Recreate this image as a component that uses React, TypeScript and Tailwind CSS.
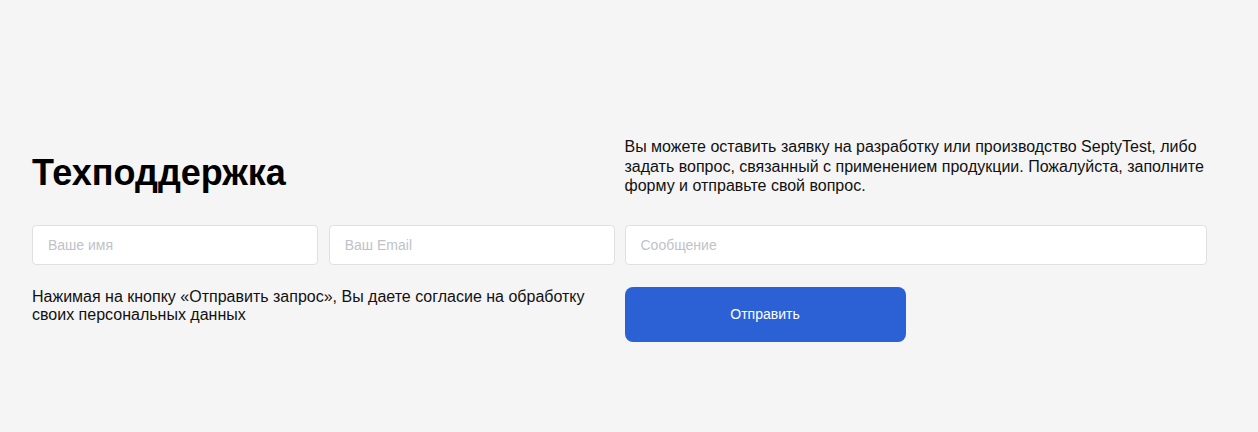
import React from 'react';

export default function App() {
  return (
    <div className="min-h-[432px] bg-[#f5f5f5] font-['Liberation_Sans',Arial,sans-serif] text-black">
      <section className="pl-[32px] pr-[51px] pt-[137px]">
        <div className="grid grid-cols-2 gap-x-[10px]">
          <div className="flex items-center pt-[14px]">
            <h2 className="text-[36px] font-bold leading-none">Техподдержка</h2>
          </div>
          <p className="text-[16px] leading-[19.5px] text-[#111]">
            Вы можете оставить заявку на разработку или производство SeptyTest, либо задать вопрос,
            связанный с применением продукции. Пожалуйста, заполните форму и отправьте свой вопрос.
          </p>

          <div className="mt-[29px] grid grid-cols-2 gap-x-[11px]">
            <input
              className="h-[40px] rounded-[4px] border border-[#dfe0e5] bg-white px-[15px] text-[14px] outline-none placeholder:text-[#c0c2c9]"
              placeholder="Ваше имя"
            />
            <input
              className="h-[40px] rounded-[4px] border border-[#dfe0e5] bg-white px-[15px] text-[14px] outline-none placeholder:text-[#c0c2c9]"
              placeholder="Ваш Email"
            />
          </div>
          <div className="mt-[29px]">
            <input
              className="h-[40px] w-full rounded-[4px] border border-[#dfe0e5] bg-white px-[15px] text-[14px] outline-none placeholder:text-[#c0c2c9]"
              placeholder="Сообщение"
            />
          </div>

          <p className="mt-[23px] text-[16px] leading-[18px] text-[#111]">
            Нажимая на кнопку «Отправить запрос», Вы даете согласие на обработку своих персональных
            данных
          </p>
          <div className="mt-[22px]">
            <button className="h-[55px] w-[281px] rounded-[8px] bg-[#2c61d6] text-[14px] text-white">
              Отправить
            </button>
          </div>
        </div>
      </section>
    </div>
  );
}
